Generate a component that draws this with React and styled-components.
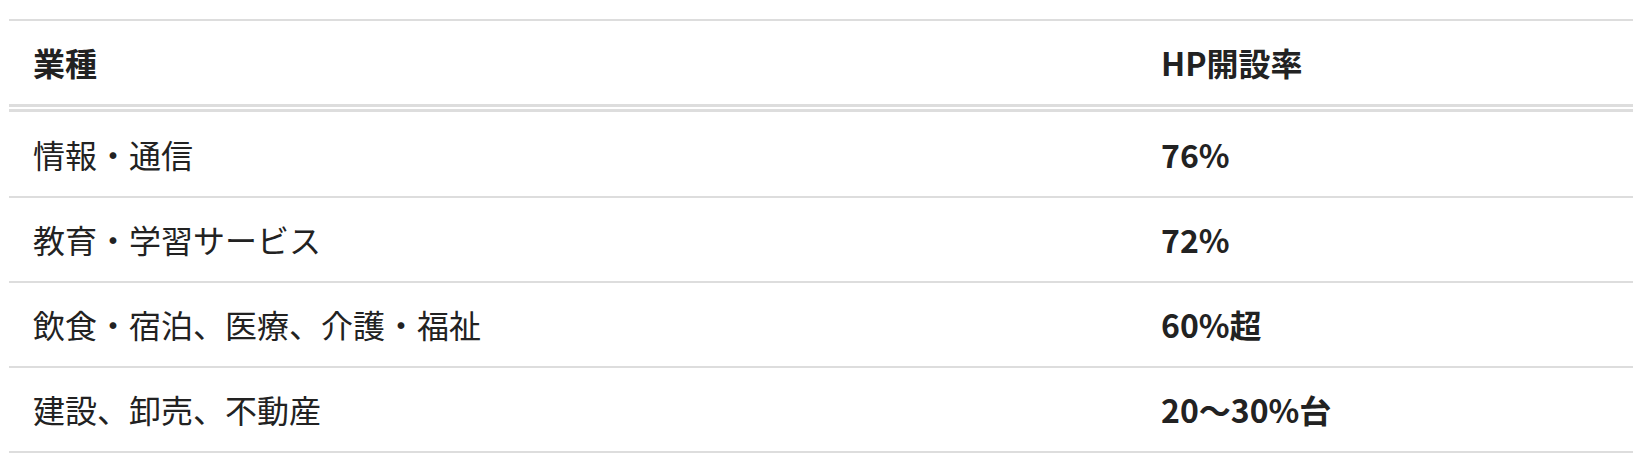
import React from "react";
import styled, { createGlobalStyle } from "styled-components";

const GlobalStyle = createGlobalStyle`
  html, body {
    margin: 0;
    padding: 0;
    background: #ffffff;
  }
  body {
    font-family: "Noto Sans CJK JP", "Noto Sans", sans-serif;
    color: #222222;
  }
`;

const Wrapper = styled.div`
  padding: 19px 15px 0 9px;
`;

const Table = styled.table`
  width: 1624px;
  border-collapse: separate;
  border-spacing: 0;
  border-top: 2px solid #dddddd;
  font-size: 32px;
  line-height: 51px;
  table-layout: fixed;
`;

const HeadCell = styled.th`
  text-align: left;
  font-weight: 700;
  padding: 16px 24px;
  border-bottom: 8px double #dddddd;
  width: ${(p) => p.$width || "auto"};
`;

const Cell = styled.td`
  text-align: left;
  font-weight: ${(p) => (p.$bold ? 700 : 400)};
  padding: 16px 24px;
  border-bottom: 2px solid #dddddd;
`;

const Row = styled.tr`
  &:first-child > td {
    padding-top: 17px;
  }
`;

const rows = [
  ["情報・通信", "76%"],
  ["教育・学習サービス", "72%"],
  ["飲食・宿泊、医療、介護・福祉", "60%超"],
  ["建設、卸売、不動産", "20〜30%台"],
];

export default function App() {
  return (
    <>
      <GlobalStyle />
      <Wrapper>
        <Table>
          <thead>
            <tr>
              <HeadCell $width="1080px">業種</HeadCell>
              <HeadCell>HP開設率</HeadCell>
            </tr>
          </thead>
          <tbody>
            {rows.map(([k, v]) => (
              <Row key={k}>
                <Cell>{k}</Cell>
                <Cell $bold>{v}</Cell>
              </Row>
            ))}
          </tbody>
        </Table>
      </Wrapper>
    </>
  );
}
